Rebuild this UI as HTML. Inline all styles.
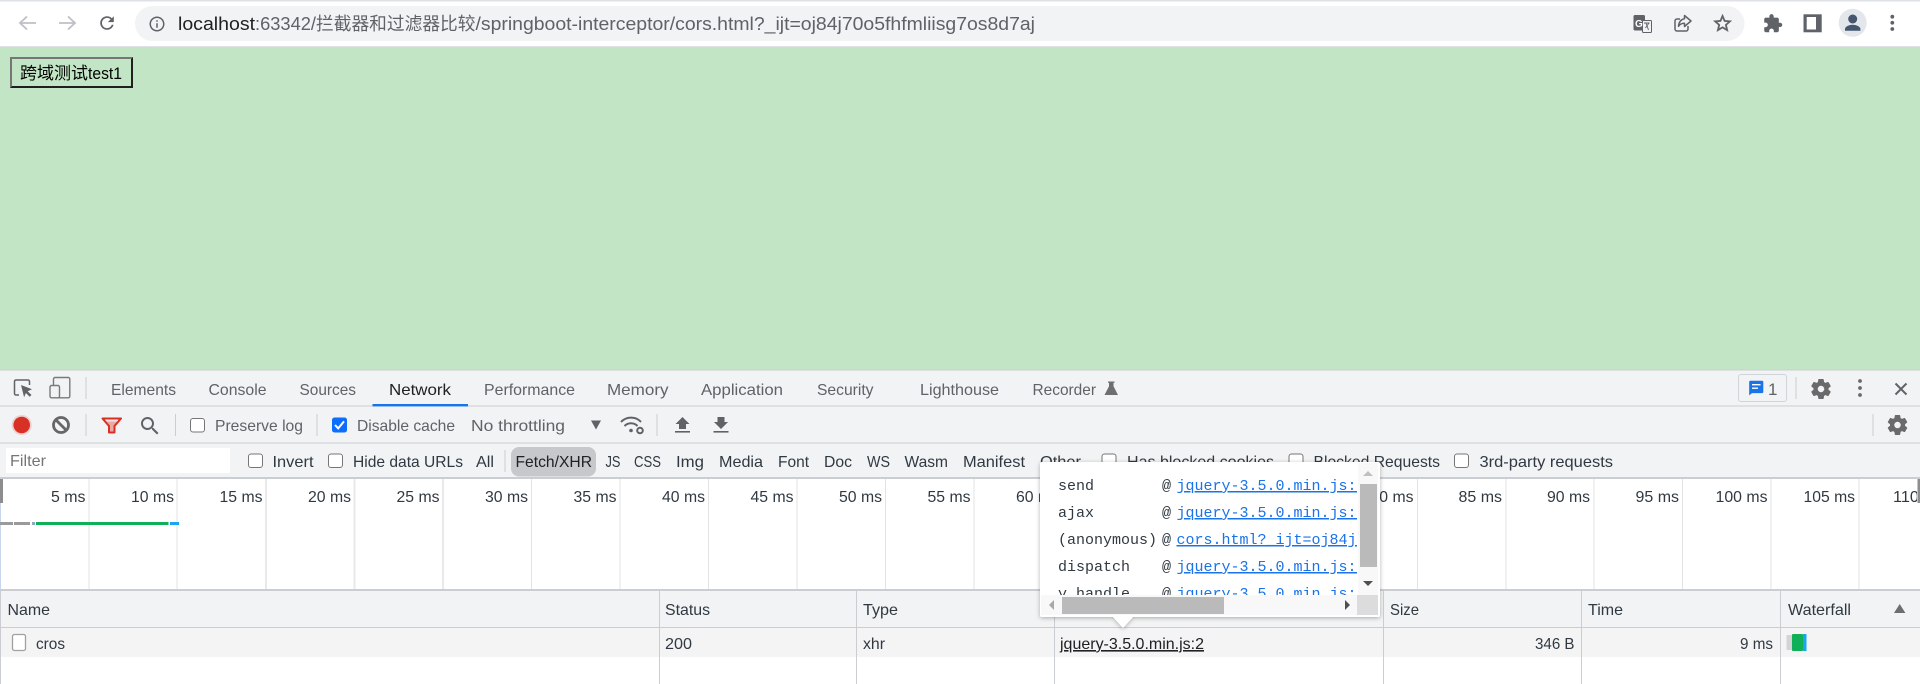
<!DOCTYPE html>
<html lang="zh-CN">
<head>
<meta charset="utf-8">
<title>cors.html</title>
<style>
html,body{margin:0;padding:0;width:1920px;height:684px;overflow:hidden;background:#fff}
svg{display:block}
text{font-family:"Liberation Sans","Noto Sans CJK SC",sans-serif;font-size:16px;fill:#303942;white-space:pre}
.t{fill:#5f6368}
.d{fill:#303942}
.k{fill:#202124}
.m{font-family:"Liberation Mono","DejaVu Sans Mono",monospace;font-size:15px;fill:#303942}
.l{font-family:"Liberation Mono","DejaVu Sans Mono",monospace;font-size:15px;fill:#1a73e8;text-decoration:underline}
.g{fill:#5f6368}
.cb{fill:#fff;stroke:#767676;stroke-width:1}
.u{font-size:18px;fill:#5f6368}
</style>
</head>
<body>
<svg xmlns="http://www.w3.org/2000/svg" width="1920" height="684" viewBox="0 0 1920 684">
<defs>
<path id="gear" d="M19.14 12.94c.04-.3.06-.61.06-.94 0-.32-.02-.64-.07-.94l2.03-1.58c.18-.14.23-.41.12-.61l-1.92-3.32c-.12-.22-.37-.29-.59-.22l-2.39.96c-.5-.38-1.03-.7-1.62-.94l-.36-2.54c-.04-.24-.24-.41-.48-.41h-3.84c-.24 0-.43.17-.47.41l-.36 2.54c-.59.24-1.13.57-1.62.94l-2.39-.96c-.22-.08-.47 0-.59.22L2.74 8.87c-.12.21-.08.47.12.61l2.03 1.58c-.05.3-.09.63-.09.94s.02.64.07.94l-2.03 1.58c-.18.14-.23.41-.12.61l1.92 3.32c.12.22.37.29.59.22l2.39-.96c.5.38 1.03.7 1.62.94l.36 2.54c.05.24.24.41.48.41h3.84c.24 0 .44-.17.47-.41l.36-2.54c.59-.24 1.13-.56 1.62-.94l2.39.96c.22.08.47 0 .59-.22l1.92-3.32c.12-.22.07-.47-.12-.61l-2.01-1.58zM12 15.6c-1.98 0-3.6-1.62-3.6-3.6s1.62-3.6 3.6-3.6 3.6 1.62 3.6 3.6-1.62 3.6-3.6 3.6z"/>
<clipPath id="popclip"><rect x="1040" y="462" width="317" height="133"/></clipPath>
<filter id="sh" x="-5%" y="-10%" width="110%" height="120%"><feDropShadow dx="0" dy="1" stdDeviation="2" flood-color="#000" flood-opacity=".3"/></filter>
</defs>

<!-- browser chrome -->
<rect width="1920" height="47" fill="#fff"/>
<rect width="1920" height="1.5" fill="#dee1e6"/>
<rect x="0" y="46" width="1920" height="1" fill="#dee1e6"/>
<rect x="135" y="6" width="1609.5" height="35" rx="17.5" fill="#f1f3f4"/>
<path d="M36 23H20M27 16.5L20 23l7 6.5" fill="none" stroke="#bdc1c6" stroke-width="1.8"/>
<path d="M59 23h16M68 16.5L75 23l-7 6.5" fill="none" stroke="#bdc1c6" stroke-width="1.8"/>
<path class="g" transform="translate(96.8 12.8) scale(.85)" d="M17.65 6.35A7.96 7.96 0 0 0 12 4a8 8 0 1 0 7.73 10h-2.08A6 6 0 1 1 12 6c1.66 0 3.14.69 4.22 1.78L13 11h7V4l-2.35 2.35z"/>
<path class="g" transform="translate(148 15) scale(.75)" d="M11 7h2v2h-2zm0 4h2v6h-2zm1-9C6.48 2 2 6.48 2 12s4.48 10 10 10 10-4.48 10-10S17.52 2 12 2zm0 18c-4.41 0-8-3.59-8-8s3.59-8 8-8 8 3.59 8 8-3.59 8-8 8z"/>
<text x="178" y="30" textLength="77" lengthAdjust="spacingAndGlyphs" style="font-size:18px;fill:#202124">localhost</text>
<text class="u" x="255" y="30" textLength="61" lengthAdjust="spacingAndGlyphs">:63342/</text>
<text class="u" x="316" y="30" textLength="159.5" lengthAdjust="spacingAndGlyphs">拦截器和过滤器比较</text>
<text class="u" x="475.5" y="30" textLength="559.5" lengthAdjust="spacingAndGlyphs">/springboot-interceptor/cors.html?_ijt=oj84j70o5fhfmliisg7os8d7aj</text>

<!-- translate -->
<rect x="1633.500" y="15" width="11.500" height="15.500" rx="1.500" fill="#5f6368"/>
<rect x="1642.500" y="20.500" width="9" height="12" rx="1" fill="#f1f3f4" stroke="#5f6368" stroke-width="1"/>
<text x="1635" y="27" style="font-size:10px;font-weight:bold;fill:#fff">G</text>
<path d="M1644 23h5.500M1646 23l2.500 7M1649 23l-3.500 5" fill="none" stroke="#5f6368" stroke-width=".9"/>
<!-- share -->
<path d="M1680 19h-3a2 2 0 0 0-2 2v8a2 2 0 0 0 2 2h9a2 2 0 0 0 2-2v-3" fill="none" stroke="#5f6368" stroke-width="1.500"/>
<path d="M1684.500 15.500l6.500 5.500-6.500 5.500v-3.200c-2.800 0-4.700 1-6 3 .2-4 2.400-7 6-7.500z" fill="none" stroke="#5f6368" stroke-width="1.500" stroke-linejoin="round"/>
<!-- star -->
<path class="g" transform="translate(1711.500 12.300) scale(.92)" d="M22 9.24l-7.19-.62L12 2 9.19 8.63 2 9.24l5.46 4.73L5.82 21 12 17.27 18.18 21l-1.63-7.03L22 9.24zM12 15.4l-3.76 2.27 1-4.28-3.32-2.88 4.38-.38L12 6.1l1.71 4.04 4.38.38-3.32 2.88 1 4.28L12 15.4z" stroke="#5f6368" stroke-width=".4"/>
<!-- extensions -->
<path class="g" transform="translate(1762.500 13.300) scale(.86)" d="M20.5 11H19V7c0-1.1-.9-2-2-2h-4V3.5C13 2.12 11.88 1 10.5 1S8 2.12 8 3.5V5H4c-1.1 0-1.99.9-1.99 2v3.8H3.5c1.49 0 2.7 1.21 2.7 2.7s-1.21 2.7-2.7 2.7H2V20c0 1.1.9 2 2 2h3.8v-1.5c0-1.49 1.21-2.7 2.7-2.7 1.49 0 2.7 1.21 2.7 2.7V22H17c1.1 0 2-.9 2-2v-4h1.5c1.38 0 2.5-1.12 2.5-2.5S21.88 11 20.500 11z"/>
<!-- side panel -->
<rect x="1803.500" y="14.300" width="18.200" height="18" fill="#5f6368"/>
<rect x="1806.700" y="17" width="9.300" height="12.500" fill="#fff"/>
<!-- avatar -->
<circle cx="1852.700" cy="22.800" r="14" fill="#e3e6ea"/>
<circle cx="1852.700" cy="19" r="4.500" fill="#45566f"/>
<path d="M1845 30.700v-1.700c0-2.800 4.700-4.300 7.700-4.300s7.700 1.500 7.700 4.300v1.700z" fill="#45566f"/>
<circle class="g" cx="1892.300" cy="16.700" r="1.900"/><circle class="g" cx="1892.300" cy="22.800" r="1.900"/><circle class="g" cx="1892.300" cy="29" r="1.900"/>

<!-- page -->
<rect x="0" y="47" width="1920" height="323" fill="#c2e6c5"/>
<rect x="11" y="58" width="121" height="29" fill="#c2e6c5"/>
<path d="M10 88V57h123l-2 2H12v27z" fill="#767676"/>
<path d="M133 57v31H10l2-2h119V59z" fill="#1f1f1f"/>
<text x="20" y="79" textLength="68" lengthAdjust="spacingAndGlyphs" style="font-size:17px;fill:#000">跨域测试</text>
<text x="88" y="79" textLength="34" lengthAdjust="spacingAndGlyphs" style="font-size:17px;fill:#000">test1</text>

<!-- devtools tab bar -->
<rect x="0" y="370" width="1920" height="108" fill="#f1f3f4"/>
<rect x="0" y="369.500" width="1920" height="1" fill="#cacdd1"/>
<rect x="0" y="405.500" width="1920" height="1" fill="#cacdd1"/>
<rect x="0" y="442.500" width="1920" height="1" fill="#cacdd1"/>
<rect x="0" y="477" width="1920" height="2" fill="#cacdd1"/>
<path d="M29.500 385v-3.500a1.500 1.500 0 0 0-1.500-1.500H16a1.500 1.500 0 0 0-1.500 1.500v12a1.500 1.500 0 0 0 1.500 1.500h3" fill="none" stroke="#5f6368" stroke-width="1.500"/>
<path d="M21 385l11 4.300-4.300 1.900 3.800 3.800-1.800 1.800-3.800-3.800-1.800 4.200z" fill="#5f6368"/>
<rect x="53.500" y="377.500" width="16.300" height="20.300" rx="1.500" fill="none" stroke="#7a7a7a" stroke-width="1.400"/>
<rect x="50" y="385.500" width="9.500" height="12.300" rx="1.500" fill="#f1f3f4" stroke="#7a7a7a" stroke-width="1.400"/>
<rect x="85.500" y="377" width="1" height="22" fill="#cacdd1"/>

<text class="t" x="111" y="395" textLength="65" lengthAdjust="spacingAndGlyphs">Elements</text>
<text class="t" x="208.500" y="395" textLength="58" lengthAdjust="spacingAndGlyphs">Console</text>
<text class="t" x="299.500" y="395" textLength="56.500" lengthAdjust="spacingAndGlyphs">Sources</text>
<text class="k" x="389" y="395" textLength="62" lengthAdjust="spacingAndGlyphs">Network</text>
<rect x="372.500" y="404" width="95.500" height="2.400" fill="#1a73e8"/>
<text class="t" x="484" y="395" textLength="91" lengthAdjust="spacingAndGlyphs">Performance</text>
<text class="t" x="607" y="395" textLength="61.500" lengthAdjust="spacingAndGlyphs">Memory</text>
<text class="t" x="701" y="395" textLength="82" lengthAdjust="spacingAndGlyphs">Application</text>
<text class="t" x="817" y="395" textLength="56.500" lengthAdjust="spacingAndGlyphs">Security</text>
<text class="t" x="920" y="395" textLength="79" lengthAdjust="spacingAndGlyphs">Lighthouse</text>
<text class="t" x="1032.500" y="395" textLength="63.500" lengthAdjust="spacingAndGlyphs">Recorder</text>
<path d="M1108 381.500h6.500v1.200h-1v3.600l4.500 8.700h-13.500l4.500-8.700v-3.600h-1z" fill="#6e6e6e"/>

<!-- right of tabs -->
<rect x="1738.500" y="374.500" width="48" height="27" rx="2.500" fill="#f1f3f4" stroke="#d0d3d7"/>
<path d="M1750.500 380.700h11.500a1.300 1.300 0 0 1 1.300 1.300v9.800a1.300 1.300 0 0 1-1.300 1.300h-10l-2.800 2.300v-13.100a1.300 1.300 0 0 1 1.300-1.600z" fill="#1a73e8"/>
<rect x="1752" y="384" width="8.500" height="1.400" fill="#fff"/><rect x="1752" y="387.500" width="6" height="1.400" fill="#fff"/>
<text class="t" x="1768" y="395" style="font-size:17px">1</text>
<rect x="1795.500" y="377" width="1" height="22" fill="#cacdd1"/>
<use href="#gear" fill="#6a6a6a" stroke="#6a6a6a" stroke-width=".7" transform="translate(1809 377)"/>
<circle cx="1860" cy="381" r="1.900" fill="#6a6a6a"/><circle cx="1860" cy="388" r="1.900" fill="#6a6a6a"/><circle cx="1860" cy="395" r="1.900" fill="#6a6a6a"/>
<path d="M1895.500 383.500l11 11M1906.500 383.500l-11 11" stroke="#5f6368" stroke-width="2" fill="none"/>

<!-- toolbar -->
<circle cx="21.700" cy="425" r="10" fill="#d93025" opacity=".18"/>
<circle cx="21.700" cy="425" r="8.300" fill="#d93025"/>
<circle cx="61" cy="425" r="7.500" fill="none" stroke="#666" stroke-width="2.800"/>
<path d="M55.500 419.500l11 11" stroke="#666" stroke-width="2.800"/>
<rect x="85.500" y="414" width="1" height="22" fill="#cacdd1"/>
<path d="M102.500 418.500h18.500l-6.500 7.500v6.500h-5.500V426z" fill="#eba9a3" stroke="#d93025" stroke-width="2" stroke-linejoin="round"/>
<path d="M105 419.500h13.500l-1.500 2h-10.500z" fill="#fbe3e1"/>
<path class="g" transform="translate(138 414)" d="M15.500 14h-.79l-.28-.27C15.41 12.59 16 11.11 16 9.500 16 5.910 13.090 3 9.500 3S3 5.910 3 9.500 5.910 16 9.500 16c1.610 0 3.090-.59 4.230-1.570l.27.28v.79l5 4.990L20.490 19l-4.990-5zm-6 0C7.010 14 5 11.990 5 9.500S7.010 5 9.500 5 14 7.010 14 9.500 11.990 14 9.500 14z"/>
<rect x="175" y="414" width="1" height="22" fill="#cacdd1"/>
<rect class="cb" x="190.500" y="418.500" width="14" height="13.500" rx="2.500"/>
<text class="t" x="215" y="431" textLength="88" lengthAdjust="spacingAndGlyphs">Preserve log</text>
<rect x="316.500" y="414" width="1" height="22" fill="#cacdd1"/>
<rect x="332" y="417.500" width="15" height="15" rx="2.500" fill="#0b6efd"/>
<path d="M335 425l3.200 3.400 5.800-7" fill="none" stroke="#fff" stroke-width="2"/>
<text class="t" x="357" y="431" textLength="98" lengthAdjust="spacingAndGlyphs">Disable cache</text>
<text class="t" x="471" y="431" textLength="94" lengthAdjust="spacingAndGlyphs">No throttling</text>
<path d="M591 420.500h10l-5 9z" fill="#5f6368"/>
<path d="M621 422a13.500 13.500 0 0 1 20 0M624.500 426a9 9 0 0 1 13 0" fill="none" stroke="#5f6368" stroke-width="2"/>
<circle cx="631" cy="430.500" r="1.800" fill="#5f6368"/>
<circle cx="640" cy="430.500" r="2.800" fill="none" stroke="#5f6368" stroke-width="2"/>
<rect x="656.500" y="414" width="1" height="22" fill="#cacdd1"/>
<path d="M682.500 417l7 7h-3.500v5h-7v-5h-3.500z" fill="#5f6368"/><rect x="675" y="431" width="15" height="1.600" fill="#5f6368"/>
<path d="M721 429l7-7h-3.500v-5h-7v5H714z" fill="#5f6368"/><rect x="713.500" y="431" width="15" height="1.600" fill="#5f6368"/>
<rect x="1872.500" y="414" width="1" height="22" fill="#cacdd1"/>
<use href="#gear" fill="#6a6a6a" stroke="#6a6a6a" stroke-width=".7" transform="translate(1885.500 413)"/>

<!-- filter bar -->
<rect x="6" y="448" width="224" height="25" fill="#fff"/>
<text x="10" y="466" textLength="36" lengthAdjust="spacingAndGlyphs" style="fill:#757575">Filter</text>
<rect class="cb" x="248.500" y="454" width="14" height="13.500" rx="2.500"/>
<text class="d" x="272.500" y="467" textLength="41" lengthAdjust="spacingAndGlyphs">Invert</text>
<rect class="cb" x="328.500" y="454" width="14" height="13.500" rx="2.500"/>
<text class="d" x="353" y="467" textLength="110" lengthAdjust="spacingAndGlyphs">Hide data URLs</text>
<text class="d" x="476" y="467" textLength="18" lengthAdjust="spacingAndGlyphs">All</text>
<rect x="504.500" y="450" width="1" height="22" fill="#cacdd1"/>
<rect x="511" y="447" width="85" height="29.500" rx="8" fill="#c6c8cb"/>
<text class="k" x="515.500" y="467" textLength="76.500" lengthAdjust="spacingAndGlyphs">Fetch/XHR</text>
<text class="d" x="605.500" y="467" textLength="15" lengthAdjust="spacingAndGlyphs">JS</text>
<text class="d" x="634" y="467" textLength="27" lengthAdjust="spacingAndGlyphs">CSS</text>
<text class="d" x="676" y="467" textLength="28" lengthAdjust="spacingAndGlyphs">Img</text>
<text class="d" x="719" y="467" textLength="44" lengthAdjust="spacingAndGlyphs">Media</text>
<text class="d" x="778" y="467" textLength="31" lengthAdjust="spacingAndGlyphs">Font</text>
<text class="d" x="824" y="467" textLength="28" lengthAdjust="spacingAndGlyphs">Doc</text>
<text class="d" x="867" y="467" textLength="23" lengthAdjust="spacingAndGlyphs">WS</text>
<text class="d" x="904.500" y="467" textLength="43.500" lengthAdjust="spacingAndGlyphs">Wasm</text>
<text class="d" x="963" y="467" textLength="62" lengthAdjust="spacingAndGlyphs">Manifest</text>
<text class="d" x="1040" y="467" textLength="41" lengthAdjust="spacingAndGlyphs">Other</text>
<rect class="cb" x="1102" y="454" width="14" height="13.500" rx="2.500"/>
<text class="d" x="1127" y="467" textLength="147" lengthAdjust="spacingAndGlyphs">Has blocked cookies</text>
<rect class="cb" x="1289" y="454" width="14" height="13.500" rx="2.500"/>
<text class="d" x="1313.500" y="467" textLength="126.500" lengthAdjust="spacingAndGlyphs">Blocked Requests</text>
<rect class="cb" x="1454.500" y="454" width="14" height="13.500" rx="2.500"/>
<text class="d" x="1479.500" y="467" textLength="133.500" lengthAdjust="spacingAndGlyphs">3rd-party requests</text>

<!-- timeline -->
<rect x="0" y="479" width="1920" height="205" fill="#fff"/>
<g fill="#e3e3e3">
<rect x="88.500" y="479" width="1" height="110"/><rect x="176.500" y="479" width="1" height="110"/><rect x="708" y="479" width="1" height="110"/><rect x="531" y="479" width="1" height="110"/><rect x="619.500" y="479" width="1" height="110"/><rect x="796.500" y="479" width="1" height="110"/><rect x="885" y="479" width="1" height="110"/><rect x="973.500" y="479" width="1" height="110"/><rect x="1417" y="479" width="1" height="110"/><rect x="1505.500" y="479" width="1" height="110"/><rect x="1593.500" y="479" width="1" height="110"/><rect x="1682" y="479" width="1" height="110"/><rect x="1770.500" y="479" width="1" height="110"/><rect x="1858.500" y="479" width="1" height="110"/>
</g>
<g fill="#e9e9e9">
<rect x="265" y="479" width="2" height="110"/><rect x="353.500" y="479" width="2" height="110"/><rect x="442" y="479" width="2" height="110"/>
</g>
<rect x="0" y="479" width="3" height="24" fill="#8d8d8d"/>
<rect x="0" y="503" width="1" height="87" fill="#c9d4ee"/>
<text class="d" x="51" y="502" textLength="34.500" lengthAdjust="spacingAndGlyphs">5 ms</text>
<text class="d" x="131" y="502" textLength="43" lengthAdjust="spacingAndGlyphs">10 ms</text>
<text class="d" x="219.500" y="502" textLength="43" lengthAdjust="spacingAndGlyphs">15 ms</text>
<text class="d" x="308" y="502" textLength="43" lengthAdjust="spacingAndGlyphs">20 ms</text>
<text class="d" x="396.500" y="502" textLength="43" lengthAdjust="spacingAndGlyphs">25 ms</text>
<text class="d" x="485" y="502" textLength="43" lengthAdjust="spacingAndGlyphs">30 ms</text>
<text class="d" x="573.500" y="502" textLength="43" lengthAdjust="spacingAndGlyphs">35 ms</text>
<text class="d" x="662" y="502" textLength="43" lengthAdjust="spacingAndGlyphs">40 ms</text>
<text class="d" x="750.500" y="502" textLength="43" lengthAdjust="spacingAndGlyphs">45 ms</text>
<text class="d" x="839" y="502" textLength="43" lengthAdjust="spacingAndGlyphs">50 ms</text>
<text class="d" x="927.500" y="502" textLength="43" lengthAdjust="spacingAndGlyphs">55 ms</text>
<text class="d" x="1016" y="502" textLength="43" lengthAdjust="spacingAndGlyphs">60 ms</text>
<text class="d" x="1370.500" y="502" textLength="43" lengthAdjust="spacingAndGlyphs">80 ms</text>
<text class="d" x="1458.500" y="502" textLength="43.500" lengthAdjust="spacingAndGlyphs">85 ms</text>
<text class="d" x="1547" y="502" textLength="43" lengthAdjust="spacingAndGlyphs">90 ms</text>
<text class="d" x="1635.500" y="502" textLength="43.500" lengthAdjust="spacingAndGlyphs">95 ms</text>
<text class="d" x="1715.500" y="502" textLength="52" lengthAdjust="spacingAndGlyphs">100 ms</text>
<text class="d" x="1803.500" y="502" textLength="51.500" lengthAdjust="spacingAndGlyphs">105 ms</text>
<text class="d" x="1893" y="502" textLength="52" lengthAdjust="spacingAndGlyphs">110 ms</text>
<rect x="1917" y="479" width="3" height="25" fill="#fff"/>
<rect x="1917.500" y="479" width="2.500" height="24" fill="#8d8d8d"/>
<rect x="0" y="522" width="13" height="3" fill="#9a9a9a"/>
<rect x="14" y="522" width="16" height="3" fill="#9a9a9a"/>
<rect x="32" y="522" width="3" height="3" fill="#8fa9bd"/>
<rect x="36" y="522" width="132.500" height="3" fill="#0fb057"/>
<rect x="170" y="522" width="9" height="3" fill="#19a6f0"/>

<!-- table -->
<rect x="0" y="589" width="1920" height="2" fill="#cacdd1"/>
<rect x="0" y="591" width="1920" height="36" fill="#f1f3f4"/>
<rect x="0" y="627" width="1920" height="1" fill="#cacdd1"/>
<rect x="0" y="628" width="1920" height="29" fill="#f4f4f5"/>
<rect x="0" y="591" width="1" height="93" fill="#cacdd1"/>
<g fill="#cacdd1">
<rect x="659" y="591" width="1" height="93"/><rect x="856" y="591" width="1" height="93"/><rect x="1054" y="591" width="1" height="93"/><rect x="1383" y="591" width="1" height="93"/><rect x="1581" y="591" width="1" height="93"/><rect x="1780" y="591" width="1" height="93"/>
</g>
<text class="d" x="7.500" y="615" textLength="42.500" lengthAdjust="spacingAndGlyphs">Name</text>
<text class="d" x="665" y="615" textLength="45" lengthAdjust="spacingAndGlyphs">Status</text>
<text class="d" x="863" y="615" textLength="35" lengthAdjust="spacingAndGlyphs">Type</text>
<text class="d" x="1390" y="615" textLength="29" lengthAdjust="spacingAndGlyphs">Size</text>
<text class="d" x="1588" y="615" textLength="35" lengthAdjust="spacingAndGlyphs">Time</text>
<text class="d" x="1788" y="615" textLength="63" lengthAdjust="spacingAndGlyphs">Waterfall</text>
<path d="M1894 613l5.700-9 5.700 9z" fill="#6e6e6e"/>
<rect x="12.500" y="634.500" width="13" height="16" rx="1.800" fill="#fff" stroke="#a0a0a0" stroke-width="1.300"/>
<text class="d" x="36" y="649" textLength="29" lengthAdjust="spacingAndGlyphs">cros</text>
<text class="d" x="665" y="649" textLength="27" lengthAdjust="spacingAndGlyphs">200</text>
<text class="d" x="863" y="649" textLength="22" lengthAdjust="spacingAndGlyphs">xhr</text>
<text x="1060" y="649" textLength="144" lengthAdjust="spacingAndGlyphs" style="fill:#202124;text-decoration:underline">jquery-3.5.0.min.js:2</text>
<text class="d" x="1535" y="649" textLength="39.500" lengthAdjust="spacingAndGlyphs">346 B</text>
<text class="d" x="1740" y="649" textLength="33" lengthAdjust="spacingAndGlyphs">9 ms</text>
<rect x="1786.500" y="635" width="5.500" height="15" fill="#d4d4d4"/>
<rect x="1792" y="634" width="11" height="17" rx="1" fill="#0fb057"/>
<rect x="1803" y="634" width="3.500" height="17" fill="#19a6f0"/>

<!-- popover -->
<g filter="url(#sh)">
<path d="M1042 462h336a2 2 0 0 1 2 2v151a2 2 0 0 1-2 2h-245l-10 11-10-11h-71a2 2 0 0 1-2-2V464a2 2 0 0 1 2-2z" fill="#fff"/>
</g>
<g clip-path="url(#popclip)">
<text class="m" x="1058" y="490">send</text>
<text class="m" x="1058" y="517">ajax</text>
<text class="m" x="1058" y="544">(anonymous)</text>
<text class="m" x="1058" y="571">dispatch</text>
<text class="m" x="1058" y="598">y.handle</text>
<text class="m" x="1162" y="490">@</text><text class="l" x="1176.500" y="490">jquery-3.5.0.min.js:2</text>
<text class="m" x="1162" y="517">@</text><text class="l" x="1176.500" y="517">jquery-3.5.0.min.js:2</text>
<text class="m" x="1162" y="544">@</text><text class="l" x="1176.500" y="544">cors.html?_ijt=oj84j70o5fhfmliisg7os8d7aj:1</text>
<text class="m" x="1162" y="571">@</text><text class="l" x="1176.500" y="571">jquery-3.5.0.min.js:2</text>
<text class="m" x="1162" y="598">@</text><text class="l" x="1176.500" y="598">jquery-3.5.0.min.js:2</text>
</g>
<rect x="1358" y="463" width="20" height="132" fill="#f8f8f8"/>
<rect x="1360" y="484" width="17" height="83" fill="#bababa"/>
<path d="M1368 471l5 5h-10z" fill="#c0c0c0"/>
<path d="M1363 581h10l-5 5z" fill="#505050"/>
<rect x="1041" y="595" width="316" height="20" fill="#f8f8f8"/>
<rect x="1062" y="597" width="162" height="17" fill="#bababa"/>
<path d="M1049 605l5-5v10z" fill="#a8a8a8"/>
<path d="M1350 605l-5-5v10z" fill="#505050"/>
<rect x="1357" y="595" width="21" height="20" fill="#dcdcdc"/>
</svg>
</body>
</html>
